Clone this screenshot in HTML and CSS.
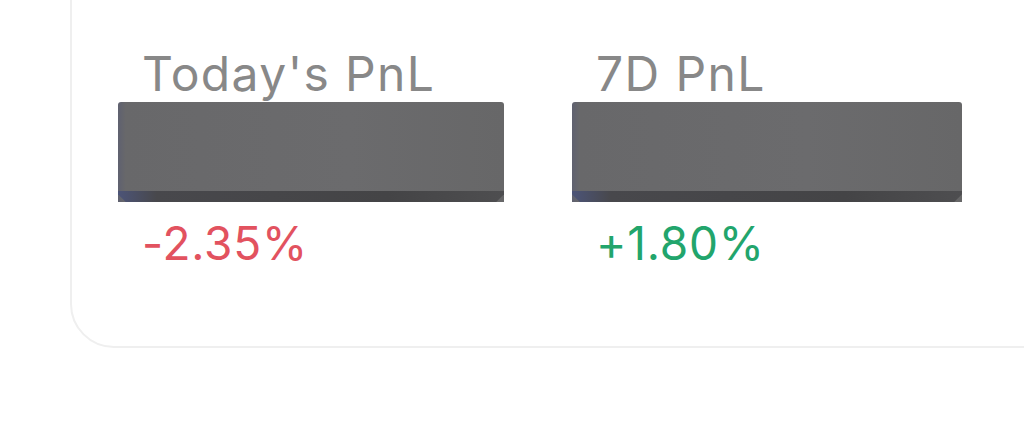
FILE: index.html
```html
<!DOCTYPE html>
<html lang="en">
<head>
    <meta charset="UTF-8">
    <meta name="viewport" content="width=device-width, initial-scale=1.0">
    <title>PnL</title>
    <link rel="stylesheet" href="styles.css">
</head>
<body>
    <div class="card">
        <div class="stats">
            <div class="stat">
                <div class="stat-label">Today's PnL</div>
                <div class="mask"></div>
                <div class="stat-value down">-2.35%</div>
            </div>
            <div class="stat">
                <div class="stat-label">7D PnL</div>
                <div class="mask"></div>
                <div class="stat-value up">+1.80%</div>
            </div>
        </div>
    </div>
</body>
</html>
```

FILE: styles.css
```css
/* reset */
* {
    margin: 0;
    padding: 0;
    box-sizing: border-box;
}

html, body {
    width: 100%;
    height: 100%;
    overflow: hidden;
}

body {
    font-family: Inter, "Noto Sans", sans-serif;
    background: #fff;
}

/* card, top and right edges run off screen */
.card {
    width: 1100px;
    height: 390px;
    margin: -42px 0 0 70px;
    border: 2px solid #efefef;
    border-radius: 44px;
    padding: 88px 0 0 46px;
}

.stats {
    display: grid;
    grid-template-columns: 386px 390px;
    column-gap: 68px;
}

.stat-label {
    padding-left: 24px;
    font-size: 48px;
    line-height: 52px;
    color: #888;
    letter-spacing: 1.4px;
    white-space: nowrap;
}

/* the grey block over the amount */
.mask {
    position: relative;
    height: 100px;
    margin-top: 2px;
    border-radius: 3px 3px 0 0;
    background: linear-gradient(90deg, #5f6170 0, #68686a 2%, #6b6b6d 60%, #676768 100%);
}

.mask::after {
    content: '';
    position: absolute;
    left: 0;
    right: 0;
    bottom: 0;
    height: 11px;
    background: linear-gradient(90deg, #4c5478 0, #48484c 10%, #444446 70%, #4e4e50 100%);
    clip-path: polygon(0 0, 100% 0, 100% 30%, 98% 100%, 2% 100%, 0 30%);
}

.stat-value {
    padding-left: 24px;
    margin-top: 15px;
    font-size: 46px;
    line-height: 52px;
    letter-spacing: 0.8px;
}

.down {
    color: #e2525f;
}

.up {
    color: #22a56c;
}
```
